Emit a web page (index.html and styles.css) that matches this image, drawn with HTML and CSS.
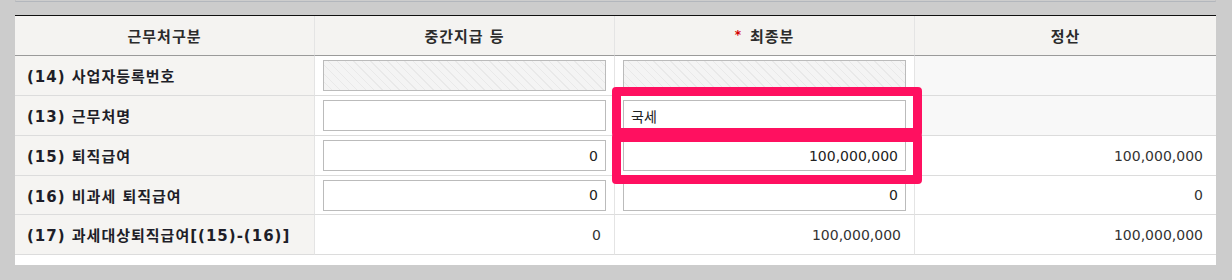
FILE: index.html
```html
<!DOCTYPE html>
<html lang="ko">
<head>
<meta charset="utf-8">
<title>퇴직소득</title>
<link rel="stylesheet" href="styles.css">
</head>
<body>
<div class="prev-box"></div>
<div class="panel">
  <div class="grid">
    <div class="cell head">근무처구분</div>
    <div class="cell head">중간지급 등</div>
    <div class="cell head"><span class="req">*</span>최종분</div>
    <div class="cell head last">정산</div>

    <div class="cell label">(14) 사업자등록번호</div>
    <div class="cell field"><div class="input disabled"></div></div>
    <div class="cell field"><div class="input disabled"></div></div>
    <div class="cell value shaded last"></div>

    <div class="cell label">(13) 근무처명</div>
    <div class="cell field"><div class="input"></div></div>
    <div class="cell field"><div class="input text">국세</div></div>
    <div class="cell value shaded last"></div>

    <div class="cell label">(15) 퇴직급여</div>
    <div class="cell field"><div class="input num">0</div></div>
    <div class="cell field"><div class="input num">100,000,000</div></div>
    <div class="cell value last">100,000,000</div>

    <div class="cell label short">(16) 비과세 퇴직급여</div>
    <div class="cell field short"><div class="input num">0</div></div>
    <div class="cell field short"><div class="input num">0</div></div>
    <div class="cell value short last">0</div>

    <div class="cell label">(17) 과세대상퇴직급여[(15)-(16)]</div>
    <div class="cell value">0</div>
    <div class="cell value">100,000,000</div>
    <div class="cell value last">100,000,000</div>
  </div>
</div>
<div class="mark mark-name"></div>
<div class="mark mark-pay"></div>
</body>
</html>
```
FILE: styles.css
```css
html, body {
  margin: 0;
  padding: 0;
}
body {
  background: #cccccc;
  width: 1232px;
  height: 280px;
  position: relative;
  font-family: "DejaVu Sans", "Noto Sans CJK KR", sans-serif;
  overflow: hidden;
}
.prev-box {
  margin-left: 15px;
  width: 1199px;
  height: 1px;
  background: #cdcdcd;
  border: 1px solid #c2c2c2;
  border-top: none;
  border-bottom-color: #b3b7bd;
}
.panel {
  margin: 13px 0 0 15px;
  width: 1201px;
  background: #ffffff;
  padding-bottom: 10px;
}
.grid {
  display: grid;
  grid-template-columns: 300px 300px 300px 301px;
  border-top: 1px solid #111111;
}
.cell {
  box-sizing: border-box;
  height: 40px;
  border-right: 1px solid #e4e4e4;
  border-bottom: 1px solid #dcdcdc;
  display: flex;
  align-items: center;
  font-size: 14px;
  color: #333333;
}
.cell.short {
  height: 39px;
}
.cell.last {
  border-right: none;
}
.head {
  background: #f4f3f1;
  border-bottom-color: #9a9a9a;
  justify-content: center;
  font-size: 15px;
  font-weight: 700;
  letter-spacing: 1px;
  color: #2b2b2b;
}
.req {
  color: #d40000;
  font-size: 12px;
  margin-right: 8px;
  position: relative;
  top: -1px;
}
.label {
  background: #f5f4f2;
  padding-left: 12px;
  font-size: 15px;
  font-weight: 700;
  letter-spacing: 1px;
  color: #1e1e28;
}
.field {
  padding: 0 8px;
}
.value {
  justify-content: flex-end;
  padding-right: 13px;
}
.shaded {
  background: #f8f8f8;
}
.input {
  box-sizing: border-box;
  width: 100%;
  height: 31px;
  border: 1px solid #bbbbbb;
  background: #ffffff;
  display: flex;
  align-items: center;
  font-size: 14px;
  color: #222222;
}
.input.disabled {
  background: repeating-linear-gradient(45deg, #f4f4f4 0 5px, #e9e9e9 5px 6px);
}
.input.text {
  padding-left: 7px;
}
.input.num {
  justify-content: flex-end;
  padding-right: 7px;
}
.mark {
  position: absolute;
  left: 612px;
  width: 310px;
  height: 50px;
  box-sizing: border-box;
  border: 9px solid #ff1060;
  border-radius: 4px;
}
.mark-name {
  top: 87px;
}
.mark-pay {
  top: 133px;
  height: 51px;
}
```
